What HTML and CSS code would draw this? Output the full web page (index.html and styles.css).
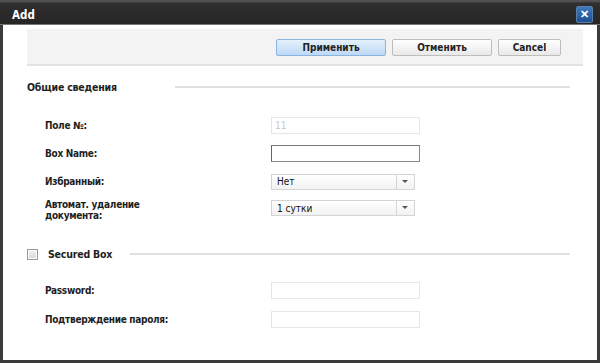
FILE: index.html
```html
<!DOCTYPE html>
<html lang="ru">
<head>
<meta charset="UTF-8">
<title>Add</title>
<link rel="stylesheet" href="styles.css">
</head>
<body>
<div class="okno">
    <div class="zagolovok">
        <span>Add</span>
        <button class="zakryt" type="button">&#x2715;</button>
    </div>
    <div class="telo">
        <div class="panel">
            <button class="knopka sinyaya">Применить</button>
            <button class="knopka shirokaya">Отменить</button>
            <button class="knopka">Cancel</button>
        </div>

        <div class="razdel">
            <div class="razdel-imya">Общие сведения</div>
            <div class="liniya"></div>
        </div>

        <div class="stroka">
            <div class="metka">Поле №:</div>
            <input class="pole neaktiv" value="11" disabled>
        </div>
        <div class="stroka">
            <div class="metka">Box Name:</div>
            <input class="pole temnoe">
        </div>
        <div class="stroka">
            <div class="metka">Избранный:</div>
            <div class="spisok"><span>Нет</span><i></i></div>
        </div>
        <div class="stroka dvoinaya">
            <div class="metka">Автомат. удаление<br>документа:</div>
            <div class="spisok"><span>1 сутки</span><i></i></div>
        </div>

        <div class="razdel vtoroi">
            <span class="flazhok"></span>
            <div class="razdel-imya">Secured Box</div>
            <div class="liniya"></div>
        </div>

        <div class="stroka">
            <div class="metka">Password:</div>
            <input class="pole neaktiv">
        </div>
        <div class="stroka">
            <div class="metka">Подтверждение пароля:</div>
            <input class="pole neaktiv">
        </div>
    </div>
</div>
</body>
</html>
```
FILE: styles.css
```css
body{
    margin: 0;
    font-family: "DejaVu Sans Condensed", "DejaVu Sans", sans-serif;
    font-size: 10px;
    color: #1e1e1e;
}

.okno{
    width: 600px;
    height: 363px;
    box-sizing: border-box;
    border: solid 3px #3a3a3a;
    border-top: none;
    background: #fff;
    display: flex;
    flex-direction: column;
}

.zagolovok{
    height: 25px;
    flex: none;
    margin: 0 -3px;
    padding: 4px 7px 0 12px;
    box-sizing: border-box;
    display: flex;
    align-items: center;
    justify-content: space-between;
    background: linear-gradient(#555 0, #4a4a4a 2px, #2f2f2f 3px, #262626 24px, #777 24px);
    color: #fff;
    font-weight: bold;
    font-size: 11.5px;
}

.zakryt{
    width: 17px;
    height: 17px;
    padding: 0;
    border: solid 1px #5a7fa8;
    border-radius: 2px;
    background: linear-gradient(#3d78c0, #1d4f90);
    color: #fff;
    font-size: 11px;
    font-weight: bold;
    line-height: 15px;
}

.telo{
    padding: 4px 14px 0 24px;
}

.panel{
    height: 34px;
    background: #f3f3f3;
    border-bottom: solid 2px #e2e2e2;
    display: flex;
    align-items: center;
    justify-content: flex-end;
    gap: 6px;
    padding-right: 22px;
    padding-top: 1px;
}

.knopka{
    height: 17px;
    width: 63px;
    padding: 0;
    border: solid 1px #bdbdbd;
    border-radius: 2px;
    background: linear-gradient(#ffffff, #e9e9e9);
    font-family: inherit;
    font-size: 10px;
    font-weight: bold;
    color: #222;
}
.knopka.shirokaya{ width: 100px; }
.knopka.sinyaya{
    width: 110px;
    border-color: #8ab4e0;
    background: linear-gradient(#e6f1fc, #bcd9f6);
}

.razdel{
    display: flex;
    align-items: center;
    margin-top: 13px;
    height: 16px;
}
.razdel-imya{
    font-weight: bold;
    font-size: 10.5px;
    letter-spacing: -0.2px;
    width: 148px;
}
.liniya{
    flex: 1;
    height: 2px;
    background: #e0e0e0;
    margin-right: 13px;
}

.razdel.vtoroi{ margin-top: 26px; }
.razdel.vtoroi .razdel-imya{ width: 82px; }
.flazhok{
    width: 9px;
    height: 9px;
    border: solid 1px #999;
    background: linear-gradient(#f2f2f2, #d8d8d8);
    box-shadow: inset 0 0 0 1px #fff;
    margin: 0 10px 0 0;
}

.stroka{
    display: flex;
    align-items: center;
    height: 17px;
    margin-top: 11px;
    padding-left: 18px;
}
.razdel + .stroka{ margin-top: 22px; }
.stroka.dvoinaya{
    height: 24px;
    margin-top: 6px;
}
.stroka.dvoinaya .metka{ padding-top: 3px; }
.razdel.vtoroi + .stroka{ margin-top: 20px; }
.razdel.vtoroi + .stroka + .stroka{ margin-top: 12px; }

.metka{
    width: 226px;
    font-weight: bold;
    letter-spacing: -0.3px;
    line-height: 11px;
}

.pole{
    width: 149px;
    height: 17px;
    box-sizing: border-box;
    border: solid 1px #e6e6e6;
    padding: 0 3px;
    font-family: inherit;
    font-size: 10px;
    background: #fff;
}
.pole.neaktiv{ color: #c8c8c8; }
.pole.temnoe{
    border-color: #888;
    border-left-color: #666;
    border-top-color: #777;
}

.spisok{
    width: 144px;
    height: 16px;
    box-sizing: border-box;
    border: solid 1px #d4d4d4;
    background: linear-gradient(#fff, #f2f2f2);
    display: flex;
    align-items: center;
}
.spisok span{
    flex: 1;
    padding-left: 5px;
    font-size: 10px;
    color: #111;
}
.spisok i{
    width: 17px;
    height: 100%;
    border-left: solid 1px #d4d4d4;
    position: relative;
}
.spisok i::after{
    content: '';
    position: absolute;
    left: 5px;
    top: 5px;
    border-left: solid 3px transparent;
    border-right: solid 3px transparent;
    border-top: solid 3px #555;
}
```
